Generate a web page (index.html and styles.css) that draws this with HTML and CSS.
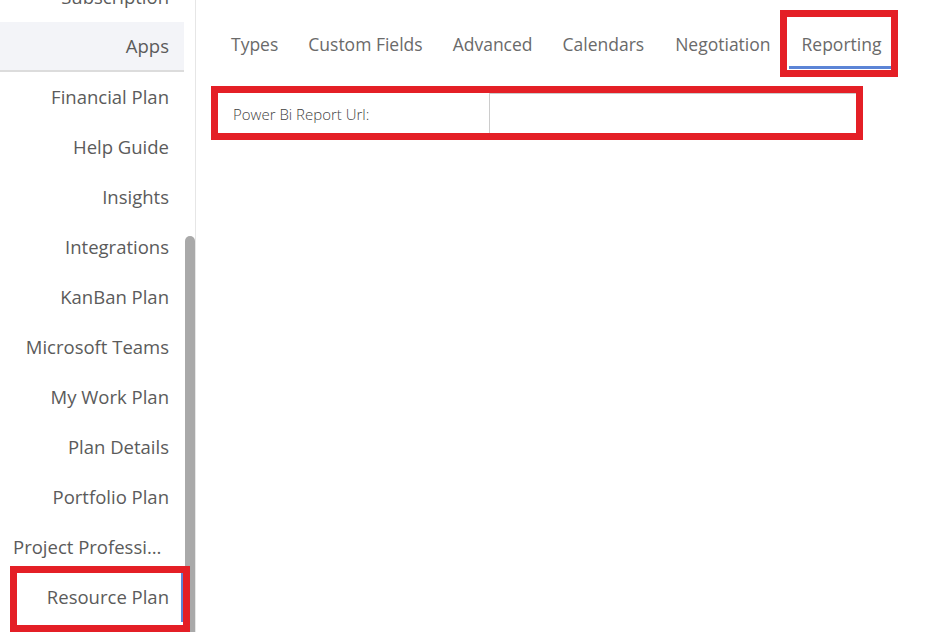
FILE: index.html
```html
<!DOCTYPE html>
<html>
<head>
<meta charset="utf-8">
<link rel="stylesheet" href="styles.css">
</head>
<body>
<div class="page">
  <aside class="sidebar">
    <ul class="nav">
      <li class="nav-item">Subscription</li>
      <li class="nav-item nav-group">Apps</li>
      <li class="nav-item">Financial Plan</li>
      <li class="nav-item">Help Guide</li>
      <li class="nav-item">Insights</li>
      <li class="nav-item">Integrations</li>
      <li class="nav-item">KanBan Plan</li>
      <li class="nav-item">Microsoft Teams</li>
      <li class="nav-item">My Work Plan</li>
      <li class="nav-item">Plan Details</li>
      <li class="nav-item">Portfolio Plan</li>
      <li class="nav-item">Project Professional</li>
      <li class="nav-item nav-active">Resource Plan</li>
    </ul>
    <div class="scroll-track"><div class="scroll-thumb"></div></div>
    <div class="mark mark-nav"></div>
  </aside>
  <main class="content">
    <nav class="tabs">
      <span class="tab">Types</span>
      <span class="tab">Custom Fields</span>
      <span class="tab">Advanced</span>
      <span class="tab">Calendars</span>
      <span class="tab tab-wide">Negotiation</span>
      <span class="tab tab-active">Reporting<span class="mark mark-tab"></span></span>
    </nav>
    <div class="field">
      <label class="field-label">Power Bi Report Url:</label>
      <div class="field-input"></div>
      <span class="mark mark-field"></span>
    </div>
  </main>
</div>
</body>
</html>
```
FILE: styles.css
```css
html, body {
  margin: 0;
  padding: 0;
  background: #ffffff;
}
body {
  font-family: "Open Sans", "Noto Sans", sans-serif;
  overflow: hidden;
}
.page {
  display: flex;
  height: 632px;
  overflow: hidden;
}
.sidebar {
  position: relative;
  width: 195px;
  flex: none;
  display: flex;
  border-right: 1px solid #e6e6e6;
  overflow: hidden;
}
.nav {
  list-style: none;
  margin: -28px 0 0 0;
  padding: 0;
  width: 184px;
  flex: none;
}
.nav-item {
  box-sizing: border-box;
  height: 50px;
  line-height: 50px;
  padding: 0 15px 0 13px;
  text-align: right;
  font-size: 18.5px;
  color: #5b5b5b;
  white-space: nowrap;
  overflow: hidden;
  text-overflow: ellipsis;
}
.nav-group {
  background: #f3f4f8;
  border-bottom: 2px solid #dcdcdc;
  line-height: 48px;
}
.nav-active {
  border-right: 3px solid #5b84d6;
  padding-right: 12px;
}
.scroll-track {
  width: 11px;
  flex: none;
}
.scroll-thumb {
  margin-top: 236px;
  margin-left: 1px;
  width: 10px;
  height: 420px;
  background: #a9a9a9;
  border-radius: 5px 5px 0 0;
}
.content {
  flex: 1;
  padding: 0 0 0 22px;
}
.tabs {
  display: flex;
  gap: 4px;
  padding-top: 22px;
}
.tab {
  position: relative;
  padding: 0 13px;
  height: 47px;
  line-height: 44px;
  font-size: 17.5px;
  color: #6a6a6a;
  box-sizing: border-box;
}
.tab-wide {
  margin-left: 1px;
  margin-right: 1px;
}
.tab-active {
  border-bottom: 3px solid #5b84d6;
}
.field {
  position: relative;
  margin-top: 24px;
  width: 639px;
  height: 41px;
  display: flex;
  align-items: stretch;
}
.field-label {
  box-sizing: border-box;
  width: 271px;
  flex: none;
  padding-left: 15px;
  line-height: 43px;
  font-size: 15px;
  font-weight: 300;
  color: #3f3f3f;
}
.field-input {
  flex: 1;
  border: 1px solid #cccccc;
  background: #fff;
}
.mark {
  position: absolute;
  border: 7px solid #e41f26;
  box-sizing: border-box;
  pointer-events: none;
}
.mark-nav {
  left: 10px;
  top: 566px;
  width: 180px;
  height: 66px;
}
.mark-tab {
  left: -9px;
  top: -12px;
  width: 118px;
  height: 67px;
}
.mark-field {
  left: -7px;
  top: -7px;
  width: 652px;
  height: 54px;
}
```
